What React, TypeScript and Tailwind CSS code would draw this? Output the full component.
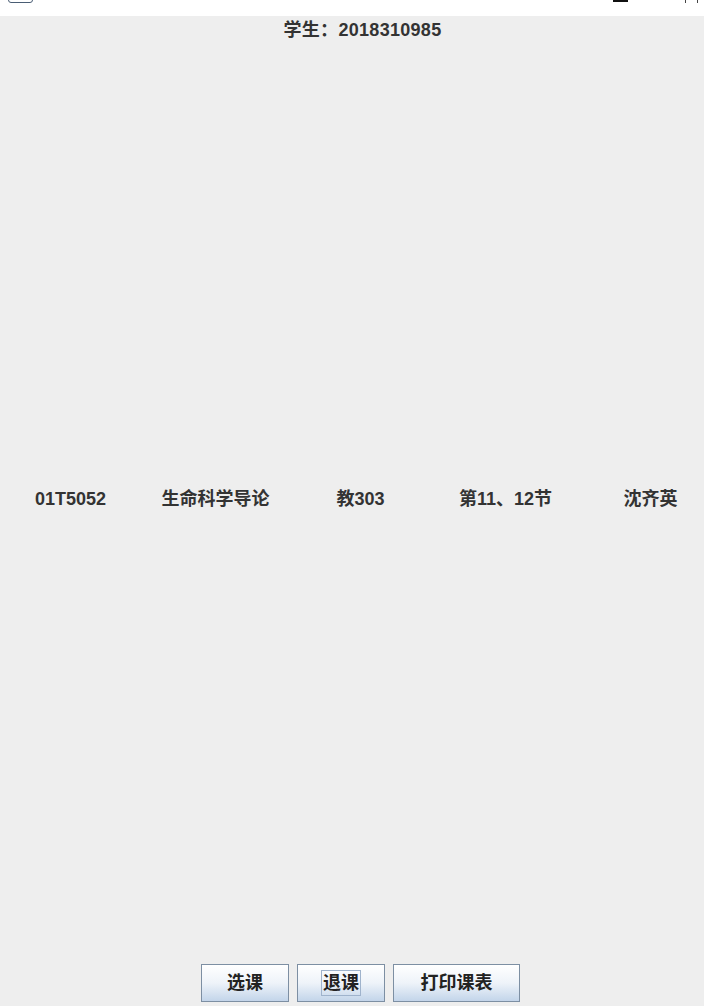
const font = { fontFamily: '"Liberation Sans", "Noto Sans CJK SC", sans-serif' };

const cells = ["01T5052", "生命科学导论", "教303", "第11、12节", "沈齐英"];

function SwingButton({ label, width, focused }: { label: string; width: string; focused?: boolean }) {
  return (
    <button
      className={`${width} h-[38px] flex items-center justify-center border border-[#7d8fa3] bg-gradient-to-b from-[#ffffff] via-[#eef3f9] to-[#c3d5ea] text-[18px] font-bold text-[#222]`}
    >
      <span className={focused ? "px-[1px] leading-[24px] outline outline-1 outline-[#9fb3cc]" : "leading-[24px]"}>
        {label}
      </span>
    </button>
  );
}

export default function App() {
  return (
    <div className="w-[704px] h-[1006px] flex flex-col overflow-hidden text-[#333]" style={font}>
      {/* window title strip, mostly cut off */}
      <div className="relative h-4 bg-white shrink-0">
        <div className="absolute left-2 -top-2 w-[25px] h-[11px] rounded-[3px] border border-[#4a5d74]" />
        <div className="absolute left-[613px] top-0 w-[15px] h-[2px] bg-[#111]" />
        <div className="absolute left-[685px] top-0 w-px h-[3px] bg-[#444]" />
        <div className="absolute left-[697px] top-0 w-px h-[3px] bg-[#444]" />
      </div>

      <div className="flex-1 flex flex-col bg-[#eeeeee]">
        <div className="h-7 pl-[21px] flex items-center justify-center text-[18px] font-bold tracking-[0.3px]">
          学生：2018310985
        </div>

        <div className="mt-[442px] -ml-[2px] grid grid-cols-[repeat(5,145px)] h-6 items-center text-[18px] font-bold">
          {cells.map((c) => (
            <div key={c} className="text-center whitespace-nowrap">
              {c}
            </div>
          ))}
        </div>

        <div className="flex-1" />

        <div className="flex justify-center gap-2 pb-1 pl-[17px]">
          <SwingButton label="选课" width="w-[88px]" />
          <SwingButton label="退课" width="w-[88px]" focused />
          <SwingButton label="打印课表" width="w-[127px]" />
        </div>
      </div>
    </div>
  );
}
